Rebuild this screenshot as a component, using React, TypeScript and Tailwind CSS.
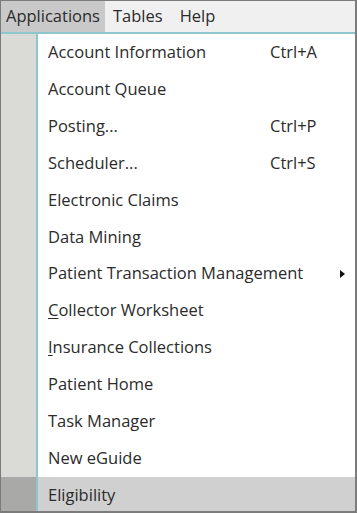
import React from 'react';

type Item = { label: React.ReactNode; shortcut?: string; submenu?: boolean; active?: boolean };

const items: Item[] = [
  { label: 'Account Information', shortcut: 'Ctrl+A' },
  { label: 'Account Queue' },
  { label: 'Posting...', shortcut: 'Ctrl+P' },
  { label: 'Scheduler...', shortcut: 'Ctrl+S' },
  { label: 'Electronic Claims' },
  { label: 'Data Mining' },
  { label: 'Patient Transaction Management', submenu: true },
  { label: <><span className="underline underline-offset-2">C</span>ollector Worksheet</> },
  { label: <><span className="underline underline-offset-2">I</span>nsurance Collections</> },
  { label: 'Patient Home' },
  { label: 'Task Manager' },
  { label: 'New eGuide' },
  { label: 'Eligibility', active: true },
];

export default function App() {
  return (
    <div
      className="flex h-[513px] w-[357px] flex-col overflow-hidden border-t border-l border-r-2 border-b-2 border-[#7b7b7b] bg-white text-[#2b2b2b]"
      style={{ fontFamily: '"Open Sans", "Noto Sans", sans-serif' }}
    >
      <div className="flex h-[33px] shrink-0 items-center border-b-2 border-[#8ec6ce] bg-[#f0f0f0] text-[16.5px]">
        <div className="flex h-full items-center bg-[#c9c9c9] px-[5px]">Applications</div>
        <div className="flex h-full items-center px-[8px]">Tables</div>
        <div className="flex h-full items-center px-[9px]">Help</div>
      </div>
      <div className="flex flex-col">
        {items.map((it, i) => (
          <div key={i} className={`flex h-[36.9px] shrink-0 ${it.active ? 'bg-[#d0d0d0]' : ''}`}>
            <div className={`w-[37px] shrink-0 border-r-2 border-[#8ec6ce] ${it.active ? 'bg-[#a9a9a7]' : 'bg-[#dadad6]'}`} />
            <div className="flex flex-1 items-center pl-[10px] text-[16.5px]">
              <span className="flex-1 whitespace-nowrap">{it.label}</span>
              {it.shortcut && <span className="w-[85px] whitespace-nowrap">{it.shortcut}</span>}
              {it.submenu && (
                <svg width="5" height="8" viewBox="0 0 5 8" className="mr-[10px]">
                  <path d="M0 0 L5 4 L0 8 Z" fill="#111" />
                </svg>
              )}
            </div>
          </div>
        ))}
      </div>
    </div>
  );
}
